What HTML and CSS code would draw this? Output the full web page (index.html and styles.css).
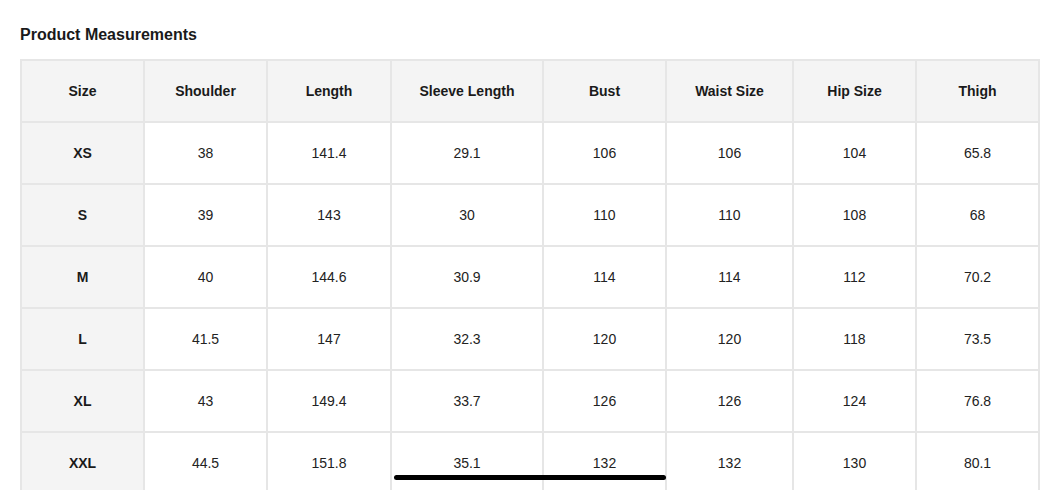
FILE: index.html
```html
<!DOCTYPE html>
<html>
<head>
<meta charset="utf-8">
<link rel="stylesheet" href="styles.css">
</head>
<body>
<div class="page">
  <h2 class="title">Product Measurements</h2>
  <div class="grid">
    <div class="cell head">Size</div>
    <div class="cell head">Shoulder</div>
    <div class="cell head">Length</div>
    <div class="cell head">Sleeve Length</div>
    <div class="cell head">Bust</div>
    <div class="cell head">Waist Size</div>
    <div class="cell head">Hip Size</div>
    <div class="cell head">Thigh</div>

    <div class="cell size">XS</div><div class="cell">38</div><div class="cell">141.4</div><div class="cell">29.1</div><div class="cell">106</div><div class="cell">106</div><div class="cell">104</div><div class="cell">65.8</div>
    <div class="cell size">S</div><div class="cell">39</div><div class="cell">143</div><div class="cell">30</div><div class="cell">110</div><div class="cell">110</div><div class="cell">108</div><div class="cell">68</div>
    <div class="cell size">M</div><div class="cell">40</div><div class="cell">144.6</div><div class="cell">30.9</div><div class="cell">114</div><div class="cell">114</div><div class="cell">112</div><div class="cell">70.2</div>
    <div class="cell size">L</div><div class="cell">41.5</div><div class="cell">147</div><div class="cell">32.3</div><div class="cell">120</div><div class="cell">120</div><div class="cell">118</div><div class="cell">73.5</div>
    <div class="cell size">XL</div><div class="cell">43</div><div class="cell">149.4</div><div class="cell">33.7</div><div class="cell">126</div><div class="cell">126</div><div class="cell">124</div><div class="cell">76.8</div>
    <div class="cell size">XXL</div><div class="cell">44.5</div><div class="cell">151.8</div><div class="cell">35.1</div><div class="cell">132</div><div class="cell">132</div><div class="cell">130</div><div class="cell">80.1</div>
  </div>
</div>
<div class="home-indicator"></div>
</body>
</html>
```

FILE: styles.css
```css
html, body {
  margin: 0;
  padding: 0;
  background: #fff;
  overflow: hidden;
  height: 490px;
}
body {
  font-family: "Liberation Sans", Arial, Helvetica, sans-serif;
  color: #1c1c1c;
}
.page {
  padding: 26px 20px 0 20px;
}
.title {
  margin: 0 0 15px 0;
  font-size: 16px;
  line-height: 18px;
  font-weight: bold;
  color: #1a1a1a;
}
.grid {
  display: grid;
  grid-template-columns: 121px 121px 122px 150px 121px 125px 121px 121px;
  grid-auto-rows: 60px;
  gap: 2px;
  padding: 2px;
  background: #e6e6e6;
  width: 1016px;
}
.cell {
  background: #fff;
  display: flex;
  align-items: center;
  justify-content: center;
  padding-bottom: 1px;
  box-sizing: border-box;
  font-size: 14px;
  color: #222;
}
.head, .size {
  background: #f4f4f4;
  font-weight: bold;
  color: #1a1a1a;
}
.home-indicator {
  position: absolute;
  left: 394px;
  top: 475px;
  width: 272px;
  height: 5px;
  border-radius: 3px;
  background: #000;
}
```
